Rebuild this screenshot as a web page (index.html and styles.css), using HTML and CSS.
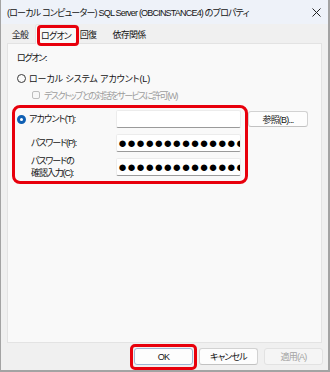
FILE: index.html
```html
<!DOCTYPE html>
<html lang="ja">
<head>
<meta charset="utf-8">
<link rel="stylesheet" href="styles.css">
</head>
<body>
<div class="window">
  <div class="titlebar">
    <span class="title">(ローカル コンピューター) SQL Server (OBCINSTANCE4) のプロパティ</span>
    <svg class="close" width="9" height="9" viewBox="0 0 9 9"><path d="M0.5 0.5 L8.5 8.5 M8.5 0.5 L0.5 8.5" stroke="#222" stroke-width="1"/></svg>
  </div>
  <div class="tabs">
    <div class="tab t1">全般</div>
    <div class="tab t2 active">ログオン</div>
    <div class="tab t3">回復</div>
    <div class="tab t4">依存関係</div>
  </div>
  <div class="panel">
    <div class="heading">ログオン:</div>
    <div class="opt"><span class="radio"></span><span class="wide">ローカル システム アカウント(L)</span></div>
    <div class="opt check-row disabled"><span class="check"></span><span class="narrow">デスクトップとの対話をサービスに許可(W)</span></div>
    <div class="grid">
      <div class="lbl"><span class="radio on"></span><span>アカウント(T):</span></div>
      <div class="field"></div>
      <div class="btn browse">参照(B)...</div>
      <div class="lbl indent">パスワード(P):</div>
      <div class="field pw">●●●●●●●●●●●●●●●●●●</div>
      <div></div>
      <div class="lbl indent two">パスワードの<br>確認入力(C):</div>
      <div class="field pw">●●●●●●●●●●●●●●●●●●</div>
      <div></div>
    </div>
  </div>
  <div class="footer">
    <div class="btn fbtn default">OK</div>
    <div class="btn fbtn">キャンセル</div>
    <div class="btn fbtn dis">適用(A)</div>
  </div>
  <div class="hl hl-tab"></div>
  <div class="hl hl-account"></div>
  <div class="hl hl-ok"></div>
</div>
</body>
</html>
```
FILE: styles.css
```css
* { box-sizing: border-box; }
html, body { margin: 0; padding: 0; }
body {
  width: 330px;
  height: 372px;
  background: #f0f0f0;
  font-family: "Liberation Sans", "Noto Sans CJK JP", sans-serif;
  font-feature-settings: "palt";
  font-size: 9px;
  letter-spacing: -0.8px;
  color: #141414;
}
.window {
  position: relative;
  width: 330px;
  height: 372px;
  background: #f0f0f0;
  border-left: 1px solid #a3a3a3;
  border-right: 2px solid #a3a3a3;
  border-bottom: 2px solid #a3a3a3;
  display: flex;
  flex-direction: column;
}
.titlebar {
  height: 24px;
  background: #eef2f9;
  display: flex;
  align-items: center;
  padding-left: 6px;
  padding-right: 7px;
  flex-shrink: 0;
}
.title {
  flex: 1;
  white-space: nowrap;
}
.close { display: block; }
.tabs {
  height: 19px;
  display: flex;
  align-items: stretch;
  padding-left: 4px;
  flex-shrink: 0;
}
.tab {
  display: flex;
  align-items: center;
  justify-content: center;
  padding-top: 2px;
}
.t1 { width: 30px; }
.t2 { width: 42px; }
.t3 { width: 22px; }
.t4 { width: 60px; }
.tab.active {
  background: #f9f9f9;
  border: 1px solid #e3e3e3;
  border-bottom: none;
  border-radius: 3px 3px 0 0;
  position: relative;
  z-index: 1;
  margin-bottom: -1px;
}
.panel {
  margin-left: 6px;
  width: 315px;
  height: 300px;
  background: #f9f9f9;
  border: 1px solid #e3e3e3;
  padding: 8px 9px;
  flex-shrink: 0;
}
.heading { height: 12px; line-height: 12px; letter-spacing: -1.3px; }
.opt {
  height: 12px;
  margin-top: 8px;
  display: flex;
  align-items: center;
  gap: 3px;
}
.wide { letter-spacing: -0.1px; }
.narrow { letter-spacing: -1.5px; }
.check-row { margin-top: 5px; padding-left: 15px; gap: 4px; }
.disabled { color: #9d9d9d; }
.radio {
  width: 9px;
  height: 9px;
  border-radius: 50%;
  border: 1px solid #3a3a3a;
  background: #fbfbfb;
  flex-shrink: 0;
}
.radio.on {
  border: 3px solid #0f5fb3;
  background: #fff;
}
.check {
  width: 8px;
  height: 8px;
  border: 1px solid #bdbdbd;
  border-radius: 2px;
  background: #f7f7f7;
}
.grid {
  margin-top: 9px;
  display: grid;
  grid-template-columns: 92px 125px 60px;
  column-gap: 7px;
  row-gap: 6px;
  grid-auto-rows: 18px;
  align-items: center;
}
.lbl {
  display: flex;
  align-items: center;
  gap: 3px;
  line-height: 12px;
}
.lbl.indent { padding-left: 14px; letter-spacing: -1.1px; }
.lbl.two { display: block; }
.field {
  height: 18px;
  background: #fff;
  border: 1px solid #ececec;
  border-bottom: 1px solid #9a9a9a;
  border-radius: 2px;
}
.pw {
  font-family: "Liberation Sans", Arial, sans-serif;
  font-feature-settings: normal;
  font-size: 15px;
  letter-spacing: 0;
  line-height: 16px;
  padding-left: 1px;
  overflow: hidden;
  white-space: nowrap;
  color: #000;
}
.btn {
  background: #fdfdfd;
  border: 1px solid #d2d2d2;
  border-bottom-color: #c2c2c2;
  border-radius: 3px;
  display: flex;
  align-items: center;
  justify-content: center;
}
.browse { height: 16px; }
.footer {
  display: flex;
  justify-content: flex-end;
  gap: 6px;
  padding-right: 5px;
  margin-top: 5px;
}
.fbtn { width: 59px; height: 17px; }
.fbtn.default { border-color: #9fb6d3; }
.fbtn.dis { background: #f5f5f5; border-color: #e2e2e2; color: #a3a3a3; }
.hl {
  position: absolute;
  border: 3px solid #e8000c;
  border-radius: 6px;
  pointer-events: none;
  z-index: 5;
}
.hl-tab { left: 36px; top: 25px; width: 42px; height: 21px; border-radius: 4px; }
.hl-account { left: 11px; top: 105px; width: 236px; height: 79px; border-radius: 8px; }
.hl-ok { left: 129px; top: 344px; width: 67px; height: 26px; border-radius: 5px; }
```
